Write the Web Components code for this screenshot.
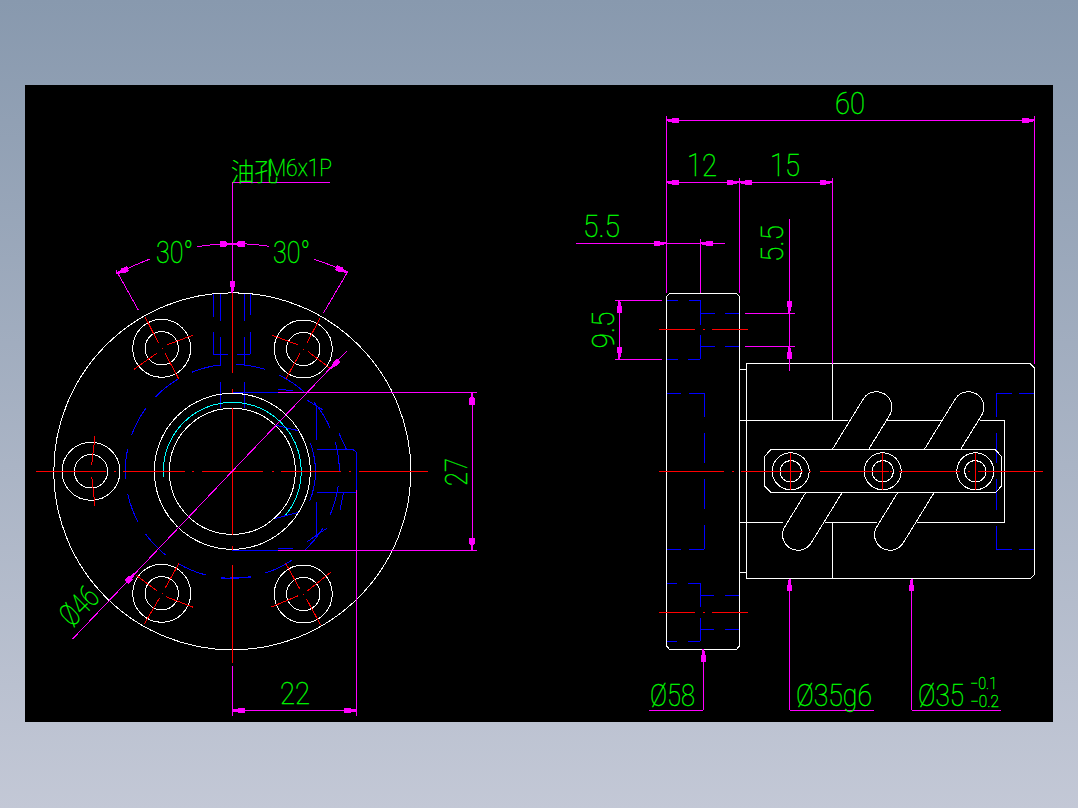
<!DOCTYPE html>
<html>
<head>
<meta charset="utf-8">
<title>CAD drawing</title>
<style>
  html, body { margin: 0; padding: 0; }
</style>
</head>
<body>
<cad-viewport>
  <cad-sheet>
    <flange-view></flange-view>
    <screw-view></screw-view>
  </cad-sheet>
</cad-viewport>
<script>
const WHITE = '#ffffff', BLUE = '#0000ff', RED = '#ff0000', MAGENTA = '#ff00ff', CYAN = '#00ffff', GREEN = '#00ff00';

// the grey window background around the drawing
class CadViewport extends HTMLElement {
  constructor() {
    super();
    this.attachShadow({ mode: 'open' }).innerHTML = `
      <style>
        :host {
          display: flex;
          box-sizing: border-box;
          width: 1078px;
          height: 808px;
          padding: 85px 25px 86px;
          background: linear-gradient(180deg, #8899ae 0%, #c3c8d6 100%);
        }
      </style>
      <slot></slot>`;
  }
}

// the black model space
class CadSheet extends HTMLElement {
  constructor() {
    super();
    this.attachShadow({ mode: 'open' }).innerHTML = `
      <style>
        :host { display: flex; flex: 1; background: #000; overflow: hidden; }
      </style>
      <slot></slot>`;
  }
}

// base class: small drawing helpers, coordinates are screen pixels
class DrawingView extends HTMLElement {
  line(color, ...segs) {
    return segs.map(s => `<line x1="${s[0]}" y1="${s[1]}" x2="${s[2]}" y2="${s[3]}" stroke="${color}"/>`).join('');
  }
  circle(cx, cy, r, color = WHITE) {
    return `<circle cx="${cx}" cy="${cy}" r="${r}" fill="none" stroke="${color}"/>`;
  }
  arc(cx, cy, r, a1, a2, color) {
    const p = a => [cx + r * Math.cos(a * Math.PI / 180), cy + r * Math.sin(a * Math.PI / 180)];
    const [x1, y1] = p(a1), [x2, y2] = p(a2);
    return `<path d="M${x1} ${y1}A${r} ${r} 0 ${a2 - a1 > 180 ? 1 : 0} 1 ${x2} ${y2}" fill="none" stroke="${color}"/>`;
  }
  shape(d, color = WHITE) {
    return `<path d="${d}" fill="none" stroke="${color}"/>`;
  }
  // tip at x,y; ux,uy points from the tip to the tail
  arrow(x, y, ux, uy) {
    const l = Math.hypot(ux, uy); ux /= l; uy /= l;
    const pt = (a, w) => `${x + ux * a - uy * w} ${y + uy * a + ux * w}`;
    return `<polygon fill="${MAGENTA}" stroke="none" points="${pt(0, 1)} ${pt(6, 1.6)} ${pt(6, 2.7)} ${pt(12.5, 2.7)} ${pt(12.5, -2.7)} ${pt(6, -2.7)} ${pt(6, -1.6)} ${pt(0, -1)}"/>`;
  }
  text(str, x, y, size, width, rot = 0) {
    const tr = rot ? ` transform="rotate(${rot} ${x} ${y})"` : '';
    return `<text x="${x}" y="${y}" font-size="${size}" textLength="${width}" lengthAdjust="spacingAndGlyphs"${tr}>${str}</text>`;
  }
  mount(viewBox, width, body) {
    this.attachShadow({ mode: 'open' }).innerHTML = `
      <style>
        :host { display: block; flex: 0 0 ${width}px; height: 637px; }
        svg { display: block; width: 100%; height: 100%; }
        line, path, circle, polygon { stroke-width: 1; shape-rendering: crispEdges; }
        text {
          fill: ${GREEN};
          stroke: ${GREEN};
          stroke-width: .35;
          font-family: Roboto, "Noto Sans CJK SC", sans-serif;
          font-weight: 100;
        }
      </style>
      <svg viewBox="${viewBox}" xmlns="http://www.w3.org/2000/svg">${body}</svg>`;
  }
}

// front view of the flange
class FlangeView extends DrawingView {
  connectedCallback() {
    if (this.shadowRoot) return;
    const cx = 232.3, cy = 471.3;
    let s = '';

    // hidden lines
    for (let a = -112, i = 0; i < 15; i++, a += 24) s += this.arc(cx, cy, 107, a, a + 16, BLUE);
    s += this.arc(cx, cy, 83, -20, 21, BLUE);
    s += this.line(BLUE,
      [213.3, 293, 213.3, 316.7], [220.7, 293, 220.7, 320.7], [244.3, 293, 244.3, 320.7], [250.3, 293, 250.3, 315],
      [213.3, 332.3, 213.3, 354.3], [220.7, 336.7, 220.7, 366], [244.3, 336.7, 244.3, 365], [250.3, 332.3, 250.3, 354.3],
      [213.3, 354.3, 227.7, 354.3], [236.7, 354.3, 250.3, 354.3],
      [220.7, 381.7, 220.7, 408.3], [244.3, 381.7, 244.3, 408.3],
      [232.3, 392.3, 278, 392.3], [278, 389, 293, 391], [232.3, 550.3, 278, 550.3], [278, 548.3, 293, 548.3],
      [220.7, 578.3, 250.7, 577.3],
      [316.7, 405, 316.7, 440], [316.7, 501.7, 316.7, 536.7],
      [316.7, 449.3, 350, 449.3], [356.7, 455, 356.7, 490], [316.7, 492.3, 356.7, 492.3],
      [275, 425, 298.3, 430.7], [273.3, 519, 298.3, 512.3],
      [339, 433.3, 346.7, 450], [343.3, 493.3, 340, 510],
      [307.3, 541.7, 326.7, 528.3], [306.7, 400, 323.3, 410]);
    s += this.shape('M350 449.3Q356.7 449.3 356.7 455', BLUE);

    // flange body
    s += this.circle(cx, cy, 178.5);
    s += this.circle(cx, cy, 78);
    s += this.circle(cx, cy, 63);
    s += this.arc(cx, cy, 69, 175.5, 399.7, CYAN);
    for (const [hx, hy] of [[161.7, 348.3], [303.3, 349], [91, 471.3], [161.7, 593.3], [303.3, 594]]) {
      s += this.circle(hx, hy, 29);
      s += this.circle(hx, hy, 16.7);
      s += this.line(RED, [hx, hy, hx + 1, hy]);
    }

    // centre lines
    s += this.line(RED,
      [36, cy, 106, cy], [113.5, cy, 115.5, cy], [123, cy, 185, cy], [192, cy, 194, cy], [202, cy, 262.5, cy],
      [271.5, cy, 273.5, cy], [281, cy, 341, cy], [349, cy, 351, cy], [359, cy, 428, cy],
      [cx, 293, cx, 372.7], [cx, 389, cx, 392.7], [cx, 408, cx, 535], [cx, 546, cx, 550], [cx, 565, cx, 663.3],
      // bolt hole crosses
      [145, 316.7, 158.3, 342.7], [165, 353.3, 179, 379.3], [134, 369.3, 156.7, 353.3], [166.7, 345, 193.3, 335],
      [320, 318.3, 306.7, 343.3], [300, 353.3, 285.7, 379.3], [271.7, 335, 298.3, 345], [308.3, 351.7, 330, 368.3],
      [95, 436, 91.7, 465], [91.7, 476.7, 95, 506],
      [179, 563.3, 165, 588.3], [159.3, 598.3, 144.3, 624], [136, 575, 156.7, 590.7], [166, 596.7, 193.3, 607.3],
      [285.7, 563.3, 300, 589.3], [306.7, 599.3, 320.7, 625], [270.7, 607.3, 298.3, 595.7], [307.3, 591, 330.7, 572.3]);

    // dimensions
    s += this.line(MAGENTA,
      [cx, 182.3, 330, 182.3], [cx, 182.3, cx, 293],
      [116, 270, 138.3, 310], [347.7, 271.7, 323.3, 313.3],
      [72.3, 639.3, 346.7, 351],
      [278, 392.3, 477, 392.3], [278, 550.3, 477, 550.3], [472, 392.3, 472, 550.3],
      [356.7, 490, 356.7, 716], [cx, 666, cx, 716], [cx, 710.5, 356.7, 710.5]);
    s += this.shape('M196.7 246.7A227.5 227.5 0 0 1 268.7 246.3', MAGENTA);
    s += this.shape('M150 259A227.5 227.5 0 0 0 118.3 273.3', MAGENTA);
    s += this.shape('M314.3 259.3A227.5 227.5 0 0 1 346.7 272.3', MAGENTA);
    s += this.arrow(cx, 244, -1, 0) + this.arrow(cx, 244, 1, 0);
    s += this.arrow(116.5, 273.5, 2.4, -1) + this.arrow(347.5, 272.5, -2.4, -1);
    s += this.arrow(cx, 293, 0, -1);
    s += this.arrow(135, 573.3, -1, 1) + this.arrow(330, 369, 1, -1);
    s += this.arrow(472, 392.3, 0, 1) + this.arrow(472, 550.3, 0, -1);
    s += this.arrow(cx, 710.5, 1, 0) + this.arrow(356.7, 710.5, -1, 0);

    // texts
    s += this.text('30°', 156, 263, 31, 37);
    s += this.text('30°', 273, 263, 31, 37);
    s += this.text('油孔', 231, 181, 25, 47);
    s += this.text('M6x1P', 268, 176, 23, 64);
    s += this.text('27', 467, 486, 31, 28, -90);
    s += this.text('22', 280, 704, 31, 30);
    s += this.text('Ø46', 72, 628, 31, 41, -45);

    this.mount('25 85 515 637', 515, s);
  }
}

// side view of the nut with the return tube
class ScrewView extends DrawingView {
  connectedCallback() {
    if (this.shadowRoot) return;
    const cy = 471.3;
    let s = '';

    // hidden lines in the flange
    s += this.line(BLUE,
      [666.7, 300.3, 678, 300.3], [689.3, 300.3, 700.3, 300.3], [700.3, 300.3, 700.3, 325], [700.3, 335, 700.3, 359.3],
      [666.7, 359.3, 678, 359.3], [688, 359.3, 700.3, 359.3],
      [700.3, 313.3, 715, 313.3], [725, 313.3, 740, 313.3], [700.3, 346.3, 715, 346.3], [725, 346.3, 740, 346.3],
      [666.3, 393.3, 680.7, 393.3], [689, 393.3, 704.3, 393.3], [666.3, 549.3, 680.7, 549.3], [689, 549.3, 704.3, 549.3],
      [704.3, 393.3, 704.3, 416.7], [704.3, 433.3, 704.3, 463.3], [704.3, 479, 704.3, 509], [704.3, 525, 704.3, 549.3],
      [666.3, 583.3, 677.3, 583.3], [687.7, 583.3, 700.3, 583.3], [700.3, 583.3, 700.3, 606.7],
      [700.3, 618, 700.3, 641.3], [666.3, 641.3, 677.3, 641.3], [687.7, 641.3, 700.3, 641.3],
      [700.3, 595.3, 713.7, 595.3], [725, 595.3, 739.3, 595.3], [700.3, 629.3, 713.7, 629.3], [725, 629.3, 739.3, 629.3],
      [996.3, 393.3, 996.3, 416.7], [996.3, 433.3, 996.3, 463.3], [996.3, 479.3, 996.3, 510], [996.3, 525.7, 996.3, 549.3],
      [996.3, 393.3, 1012, 393.3], [1019, 393.3, 1034.7, 393.3], [996.3, 549.3, 1012, 549.3], [1019, 549.3, 1034.7, 549.3]);

    // outlines
    s += this.shape('M669.5 293.5H736.5L739.5 296.5V646L736.5 649.3H669.5L666.5 646V296.5Z');
    s += this.shape('M746.3 363.7H1030L1034.7 368V574L1030.7 578.5H746.3Z');
    s += this.line(WHITE,
      [739.5, 369.7, 746.3, 369.7], [739.5, 572.3, 746.3, 572.3],
      [832.3, 363.7, 832.3, 420.3], [832.3, 522.3, 832.3, 578.5],
      [739.5, 420.3, 848.3, 420.3], [887.3, 420.3, 940.7, 420.3], [980, 420.3, 1004.7, 420.3],
      [739.5, 522.3, 783.3, 522.3], [825, 522.3, 876.7, 522.3], [916.7, 522.3, 1004.7, 522.3],
      [1004.7, 420.3, 1004.7, 522.3]);

    // the two slots, hidden behind the key plate
    for (const dx of [0, 92]) {
      s += this.line(WHITE,
        [863.5 + dx, 398.6, 832.4 + dx, 449.3], [889.9 + dx, 414.8, 868.7 + dx, 449.3],
        [805.9 + dx, 492.3, 784.5 + dx, 527.2], [842.3 + dx, 492.3, 810.9 + dx, 543.4]);
      s += this.shape(`M${863.5 + dx} 398.6A15.5 15.5 0 0 1 ${889.9 + dx} 414.8`);
      s += this.shape(`M${810.9 + dx} 543.4A15.5 15.5 0 0 1 ${784.5 + dx} 527.2`);
    }

    // key plate and its screws
    s += this.shape('M771 449.3H995L1001.7 456.7V486L995.5 492.3H771L764.3 486V456.7Z');
    for (const hx of [790.7, 882.7, 975.3]) {
      s += this.circle(hx, cy, 18.5);
      s += this.circle(hx, cy, 10.7);
      s += this.line(RED, [hx, 452.7, hx, 489.5]);
    }

    // centre lines
    s += this.line(RED,
      [659, cy, 724, cy], [731.5, cy, 733.5, cy], [741, cy, 803, cy], [809, cy, 811, cy], [820, cy, 889, cy],
      [889.5, cy, 891.5, cy], [899, cy, 960, cy], [968, cy, 970, cy], [978, cy, 1043, cy],
      [659, 329.3, 695, 329.3], [703, 329.3, 705, 329.3], [712, 329.3, 748, 329.3],
      [659, 612.3, 695, 612.3], [702.5, 612.3, 704.5, 612.3], [712, 612.3, 747.7, 612.3]);

    // dimensions
    s += this.line(MAGENTA,
      [666.3, 116, 666.3, 293], [1034.7, 116, 1034.7, 364], [666.3, 120.3, 1034.7, 120.3],
      [666.3, 182.3, 832.3, 182.3], [739.3, 178, 739.3, 293], [832.3, 178, 832.3, 364],
      [576, 243.3, 724.7, 243.3], [700.3, 239, 700.3, 293],
      [615, 300.3, 661.7, 300.3], [615, 359.3, 661.7, 359.3], [619.3, 300.3, 619.3, 359.3],
      [745, 313.3, 795, 313.3], [745, 346.3, 795, 346.3], [789.3, 219, 789.3, 371],
      [703.3, 649, 703.3, 710.3], [649, 710.3, 703.3, 710.3],
      [789.7, 578.5, 789.7, 710.3], [789.7, 710.3, 874, 710.3],
      [911.7, 578.5, 911.7, 710.3], [911.7, 710.3, 1001, 710.3]);
    s += this.arrow(666.3, 120.3, 1, 0) + this.arrow(1034.7, 120.3, -1, 0);
    s += this.arrow(666.3, 182.3, 1, 0) + this.arrow(739.3, 182.3, -1, 0);
    s += this.arrow(739.3, 182.3, 1, 0) + this.arrow(832.3, 182.3, -1, 0);
    s += this.arrow(666.3, 243.3, -1, 0) + this.arrow(700.3, 243.3, 1, 0);
    s += this.arrow(619.3, 300.3, 0, 1) + this.arrow(619.3, 359.3, 0, -1);
    s += this.arrow(789.3, 313.3, 0, -1) + this.arrow(789.3, 346.3, 0, 1);
    s += this.arrow(703.3, 649.3, 0, 1) + this.arrow(789.7, 578.5, 0, 1) + this.arrow(911.7, 578.5, 0, 1);

    // texts
    s += this.text('60', 835, 114, 31, 30);
    s += this.text('12', 687, 176, 31, 30);
    s += this.text('15', 770, 176, 31, 30);
    s += this.text('5.5', 583, 237, 31, 37);
    s += this.text('5.5', 783, 262, 31, 37, -90);
    s += this.text('9.5', 613.5, 348.5, 31, 37, -90);
    s += this.text('Ø58', 650, 706, 31, 45);
    s += this.text('Ø35g6', 796, 706, 31, 76);
    s += this.text('Ø35', 918, 706, 31, 46);
    s += this.text('−0.1', 970, 689, 16, 27);
    s += this.text('−0.2', 970, 707, 16, 29);

    this.mount('540 85 513 637', 513, s);
  }
}

customElements.define('cad-viewport', CadViewport);
customElements.define('cad-sheet', CadSheet);
customElements.define('flange-view', FlangeView);
customElements.define('screw-view', ScrewView);
</script>
</body>
</html>
